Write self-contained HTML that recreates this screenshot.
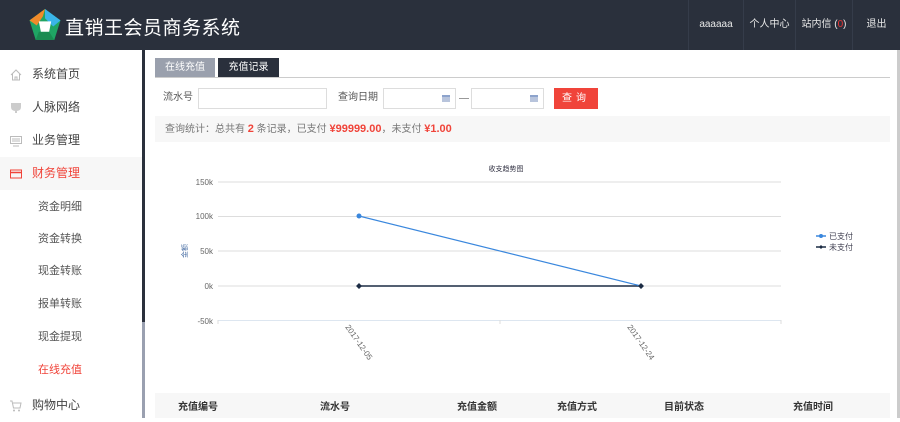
<!DOCTYPE html>
<html><head><meta charset="utf-8"><style>
*{margin:0;padding:0;box-sizing:border-box}
body{width:900px;height:418px;overflow:hidden;background:#fff;font-family:"Liberation Sans","Noto Sans CJK SC",sans-serif;font-size:12px;color:#555;position:relative}
.hd{position:absolute;left:0;top:0;width:900px;height:50px;background:#2a303c}
.logo{position:absolute;left:28px;top:9px}
.title{position:absolute;left:65px;top:13px;color:#fff;font-size:19px;letter-spacing:0.5px}
.nav{position:absolute;top:0;height:50px;line-height:50px;color:#e8e8e8;font-size:10px;text-align:center;border-left:1px solid #353c4a}
.side{position:absolute;left:0;top:50px;width:142px;height:368px;background:#fff}
.bar{position:absolute;left:142px;top:50px;width:3px;height:272px;background:#2a303c}
.bar2{position:absolute;left:142px;top:322px;width:3px;height:96px;background:#9aa0b0}
.rbar{position:absolute;left:897px;top:50px;width:3px;height:368px;background:#ccc}
.mi{position:absolute;left:0;width:142px;height:33px;line-height:33px;font-size:12px;color:#444}
.mi .t{position:absolute;left:32px}
.mi svg{position:absolute;left:10px;top:11px}
.sub{position:absolute;left:38px;font-size:11px;color:#555;line-height:14px}
.tab{position:absolute;top:58px;height:19px;line-height:19px;font-size:10px;text-align:center;color:#fff}
.inp{position:absolute;top:88px;height:21px;border:1px solid #ddd;background:#fff}
.lbl{position:absolute;top:91px;font-size:10px;color:#555;line-height:14px}
</style></head><body>
<div class="hd">
<svg class="logo" width="34" height="33" viewBox="0 0 32 32">
<polygon points="16,0 31,11 25,30 7,30 1,11" fill="#1fa564"/>
<polygon points="16,0 1,11 8,16 14,7" fill="#f08a2a"/>
<polygon points="16,0 31,11 24,17 16,9" fill="#3ab4e8"/>
<polygon points="7,30 25,30 20,22 10,22" fill="#198c52"/>
<polygon points="10,12 22,12 20,22 12,22" fill="#fff"/>
</svg>
<div class="title">直销王会员商务系统</div>
<div class="nav" style="left:688px;width:55px">aaaaaa</div>
<div class="nav" style="left:743px;width:52px">个人中心</div>
<div class="nav" style="left:795px;width:57px">站内信 (<span style="color:#e33">0</span>)</div>
<div class="nav" style="left:852px;width:48px">退出</div>
</div>
<div class="side">
<div class="mi" style="top:8px"><svg width="12" height="12"><path d="M1 6 L6 1 L11 6 M2.5 5 V11 H9.5 V5 M5 11 V8 H7 V11" fill="none" stroke="#bbb"/></svg><span class="t">系统首页</span></div>
<div class="mi" style="top:41px"><svg width="12" height="12"><path d="M1 1 H11 V5 Q11 9 6 9 Q1 9 1 5Z M5 9 V11 H7 V9" fill="#ccc"/></svg><span class="t">人脉网络</span></div>
<div class="mi" style="top:74px"><svg width="12" height="12"><rect x="0.5" y="1.5" width="11" height="7" fill="none" stroke="#bbb"/><rect x="2" y="3" width="8" height="4" fill="#ddd"/><path d="M3 11 H9" stroke="#bbb"/></svg><span class="t">业务管理</span></div>
<div class="mi" style="top:107px;background:#f7f7f7;color:#f0443a"><svg width="12" height="12"><rect x="0.5" y="2" width="11" height="8" fill="none" stroke="#f0443a"/><path d="M0.5 4.5 H11.5" stroke="#f0443a" stroke-width="1.5"/></svg><span class="t">财务管理</span></div>
<div class="sub" style="top:150px">资金明细</div>
<div class="sub" style="top:182px">资金转换</div>
<div class="sub" style="top:214px">现金转账</div>
<div class="sub" style="top:247px">报单转账</div>
<div class="sub" style="top:280px">现金提现</div>
<div class="sub" style="top:313px;color:#f0443a">在线充值</div>
<div class="mi" style="top:339px"><svg width="12" height="12"><path d="M0 1 H2 L3.5 8 H10 L11 3 H3" fill="none" stroke="#bbb"/><circle cx="4" cy="10.5" r="1" fill="#bbb"/><circle cx="9" cy="10.5" r="1" fill="#bbb"/></svg><span class="t">购物中心</span></div>
</div>
<div class="bar"></div><div class="bar2"></div><div class="rbar"></div>

<div class="tab" style="left:155px;width:60px;background:#9aa0ad">在线充值</div>
<div class="tab" style="left:218px;width:61px;background:#2a303c">充值记录</div>
<div style="position:absolute;left:155px;top:77px;width:735px;height:1px;background:#ccc"></div>

<div class="lbl" style="left:163px">流水号</div>
<div class="inp" style="left:198px;width:129px"></div>
<div class="lbl" style="left:338px">查询日期</div>
<div class="inp" style="left:383px;width:73px"><div style="position:absolute;right:5px;top:6px;width:8px;height:7px;background:#b8c4dc;border-top:2px solid #8da3cc"></div></div>
<div style="position:absolute;left:459px;top:98px;width:10px;height:1px;background:#999"></div>
<div class="inp" style="left:471px;width:73px"><div style="position:absolute;right:5px;top:6px;width:8px;height:7px;background:#b8c4dc;border-top:2px solid #8da3cc"></div></div>
<div style="position:absolute;left:554px;top:88px;width:44px;height:21px;background:#f0443a;color:#fff;font-size:10px;line-height:21px;text-align:center;letter-spacing:4px">查询</div>

<div style="position:absolute;left:155px;top:116px;width:735px;height:26px;background:#f7f7f7;font-size:10px;line-height:26px;padding-left:10px;color:#777">查询统计：总共有 <b style="color:#f0443a;font-size:11px">2</b> 条记录，已支付 <b style="color:#f0443a;font-size:11px">¥99999.00</b>，未支付 <b style="color:#f0443a;font-size:11px">¥1.00</b></div>

<svg style="position:absolute;left:0;top:0" width="900" height="418">
<text x="506" y="171" font-size="7" fill="#334" text-anchor="middle" font-family="Liberation Sans,Noto Sans CJK SC,sans-serif">收支趋势图</text>
<g stroke="#ddd" stroke-width="1">
<line x1="218" y1="182" x2="781" y2="182"/><line x1="218" y1="216.5" x2="781" y2="216.5"/><line x1="218" y1="251" x2="781" y2="251"/><line x1="218" y1="286" x2="781" y2="286"/><line x1="218" y1="320.5" x2="781" y2="320.5" stroke="#dde6f0"/>
<line x1="218" y1="320" x2="218" y2="324"/><line x1="500" y1="320" x2="500" y2="324"/><line x1="781" y1="320" x2="781" y2="324"/>
</g>
<g font-size="8" fill="#666" text-anchor="end" font-family="Liberation Sans,sans-serif">
<text x="213" y="185">150k</text><text x="213" y="219">100k</text><text x="213" y="254">50k</text><text x="213" y="289">0k</text><text x="213" y="324">-50k</text>
</g>
<text transform="translate(187,251) rotate(-90)" font-size="7" fill="#4a6fa5" text-anchor="middle" font-family="Liberation Sans,Noto Sans CJK SC,sans-serif">金额</text>
<g font-size="8" fill="#666" font-family="Liberation Sans,sans-serif">
<text transform="translate(345,327) rotate(55)">2017-12-05</text>
<text transform="translate(627,327) rotate(55)">2017-12-24</text>
</g>
<line x1="359" y1="286" x2="641" y2="286" stroke="#1c2c44" stroke-width="1.5"/>
<line x1="359" y1="216" x2="641" y2="286" stroke="#3a87dd" stroke-width="1.2"/>
<circle cx="359" cy="216" r="2.5" fill="#3a87dd"/>
<path d="M359 283 L362 286 L359 289 L356 286Z M641 283 L644 286 L641 289 L638 286Z" fill="#1c2c44"/>
<line x1="816" y1="236" x2="826" y2="236" stroke="#3a87dd" stroke-width="1.5"/><circle cx="821" cy="236" r="2" fill="#3a87dd"/>
<line x1="816" y1="247" x2="826" y2="247" stroke="#1c2c44" stroke-width="1.5"/><path d="M821 245 L823 247 L821 249 L819 247Z" fill="#1c2c44"/>
<g font-size="8" fill="#445" font-family="Liberation Sans,Noto Sans CJK SC,sans-serif"><text x="829" y="239">已支付</text><text x="829" y="250">未支付</text></g>
</svg>

<div style="position:absolute;left:155px;top:393px;width:735px;height:25px;background:#f7f7f7;font-size:10px;font-weight:bold;color:#333">
<span style="position:absolute;left:23px;top:5px">充值编号</span>
<span style="position:absolute;left:165px;top:5px">流水号</span>
<span style="position:absolute;left:302px;top:5px">充值金额</span>
<span style="position:absolute;left:402px;top:5px">充值方式</span>
<span style="position:absolute;left:509px;top:5px">目前状态</span>
<span style="position:absolute;left:638px;top:5px">充值时间</span>
</div>
</body></html>
